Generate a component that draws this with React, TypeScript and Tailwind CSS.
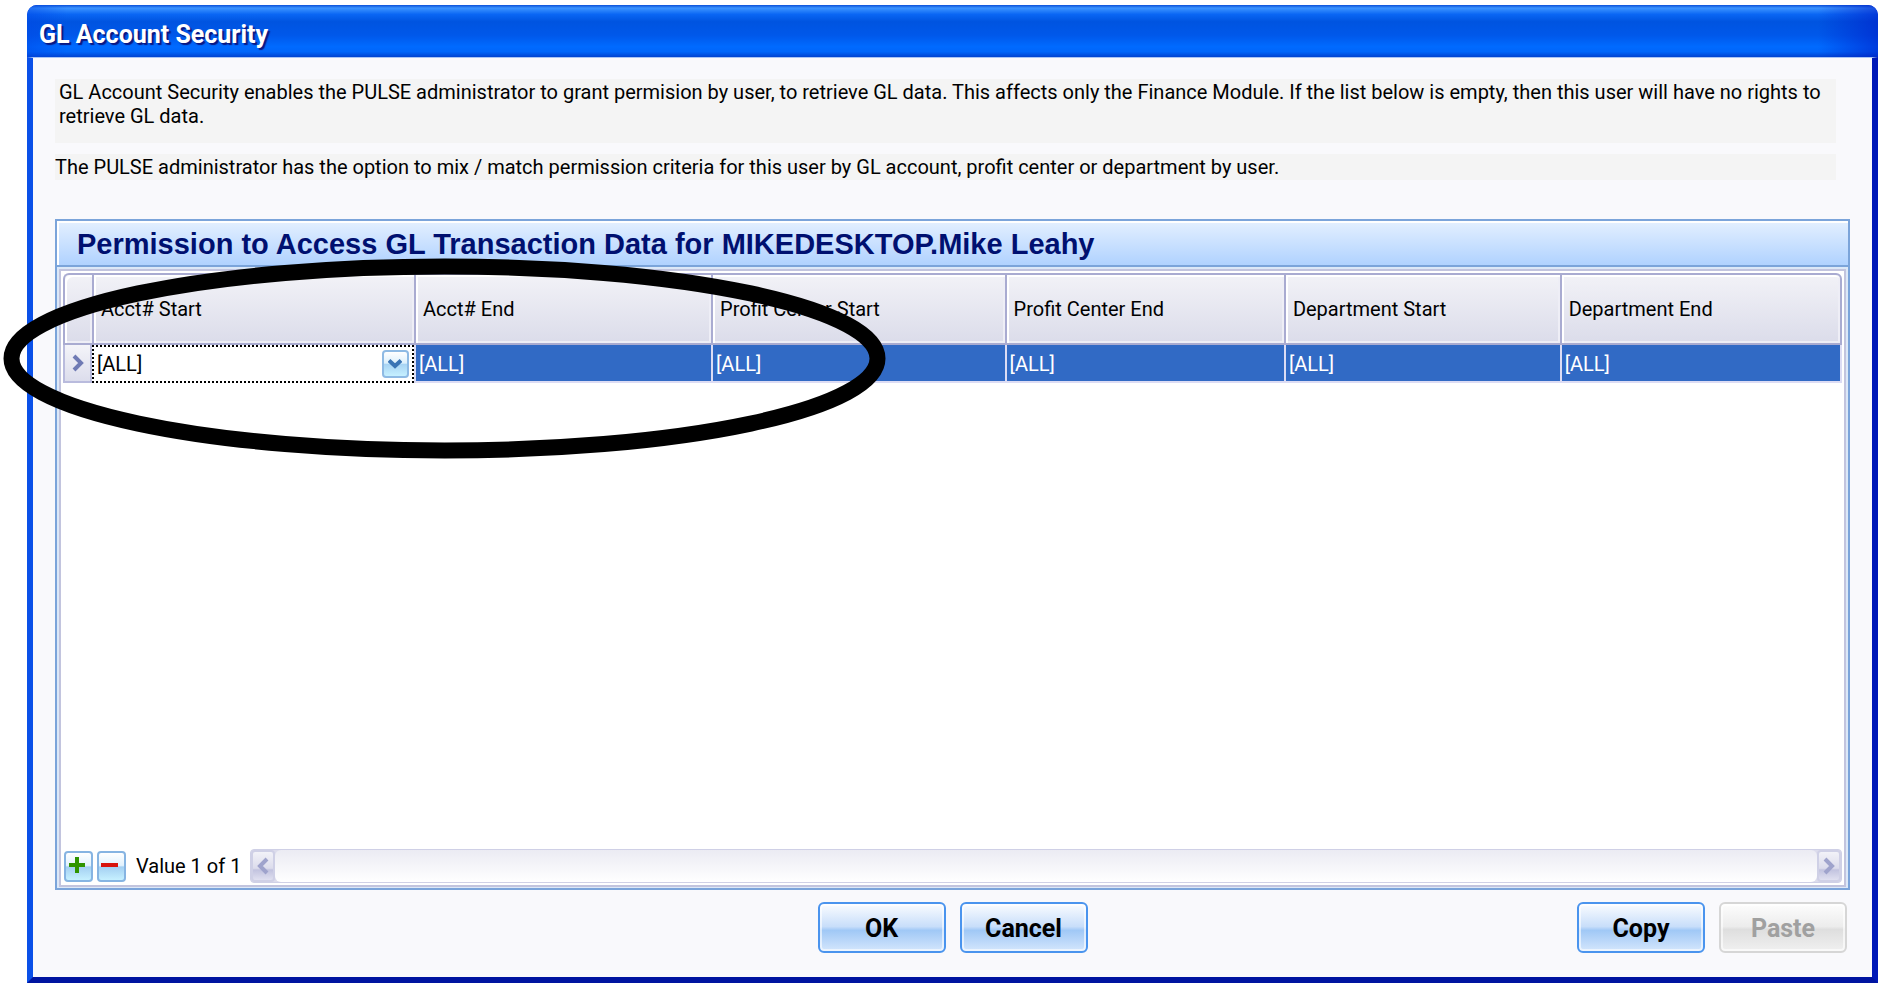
import type { ReactNode } from 'react';
import { useState } from 'react';

const columns = [
    { label: 'Acct# Start', width: 'w-[18.1%]' },
    { label: 'Acct# End', width: 'w-[16.7%]' },
    { label: 'Profit Center Start', width: 'w-[16.5%]' },
    { label: 'Profit Center End', width: 'w-[15.7%]' },
    { label: 'Department Start', width: 'w-[15.5%]' },
    { label: 'Department End', width: '' }
];

interface DialogButtonProps {
    children: ReactNode;
    disabled?: boolean;
}

const DialogButton = ({ children, disabled = false }: DialogButtonProps) => (
    <button
        type="button"
        disabled={disabled}
        className={`h-[51px] w-32 rounded-md border-2 pt-0.5 text-[25px] leading-7 font-bold shadow-[inset_0_0_0_2px_rgba(255,255,255,0.6)] ${disabled
            ? 'border-[#d6d6d6] bg-[linear-gradient(to_bottom,#fdfdfd_0%,#ececec_48%,#dedede_54%,#f0f0f0_100%)] text-[#a0a0a0]'
            : 'border-[#4a94ee] bg-[linear-gradient(to_bottom,#fafcff_0%,#c8defa_48%,#a0c8f6_56%,#d4e6fc_100%)] text-black'
            }`}
    >
        {children}
    </button>
);

const RowButton = ({ label, children }: { label: string; children: ReactNode }) => (
    <button
        type="button"
        title={label}
        aria-label={label}
        className="flex h-[31px] w-[29px] items-center justify-center rounded-[4px] border-2 border-[#86b4e2] bg-[linear-gradient(to_bottom,#ffffff_0%,#e2f2fd_46%,#a4d0f2_52%,#c6f0ff_100%)] pr-1 pb-0.5"
    >
        {children}
    </button>
);

const ScrollButton = ({ label, path }: { label: string; path: string }) => (
    <button
        type="button"
        title={label}
        aria-label={label}
        className="flex w-6 items-center justify-center rounded-[4px] border-2 border-[#cfd0e6] bg-[linear-gradient(to_bottom,#f2f2f8_0%,#dcdcec_58%,#c2c3df_64%,#e0e0f0_100%)]"
    >
        <svg width="12" height="18" viewBox="0 0 12 18" fill="none" stroke="#9fa3cc" strokeWidth="4">
            <path d={path} />
        </svg>
    </button>
);

const PermissionTable = () => {
    const [account, setAccount] = useState('[ALL]');

    return (
        <table className="w-full table-fixed border-separate border-spacing-0 text-left text-xl leading-6">
            <thead>
                <tr className="h-[72px]">
                    <th className="w-[29px] rounded-tl-md border-2 border-r-0 border-[#a9abd1] bg-[linear-gradient(to_bottom,#f2f2f7,#dbdcea)] shadow-[inset_2px_2px_0_#fff,inset_-2px_-2px_0_#eeeef6]">
                        <span className="sr-only" />
                    </th>
                    {columns.map((col) => (
                        <th
                            key={col.label}
                            className={`border-y-2 border-l-2 border-[#a9abd1] bg-[linear-gradient(to_bottom,#f2f2f7,#dbdcea)] pl-[7px] font-normal shadow-[inset_2px_2px_0_#fff,inset_-2px_-2px_0_#eeeef6] last:rounded-tr-md last:border-r-2 ${col.width}`}
                        >
                            {col.label}
                        </th>
                    ))}
                </tr>
            </thead>
            <tbody>
                <tr className="h-[38px] text-white">
                    <td className="border-x-2 border-b-2 border-[#b9bbdd] bg-[linear-gradient(to_bottom,#f4f4f9,#dcddec)] p-0">
                        <svg className="mx-auto" width="14" height="18" viewBox="0 0 14 18" fill="none" stroke="#6f7ab4" strokeWidth="4">
                            <path d="M3 2l7 7-7 7" />
                        </svg>
                    </td>
                    <td className="border-2 border-dotted border-black bg-white p-0 text-black">
                        <div className="relative">
                            <select
                                aria-label="Acct# Start"
                                value={account}
                                onChange={(e) => setAccount(e.target.value)}
                                className="block h-[34px] w-full appearance-none bg-transparent pl-[3px] outline-none"
                            >
                                <option>[ALL]</option>
                            </select>
                            <span className="pointer-events-none absolute top-[3px] right-[3px] flex h-7 w-[27px] items-center justify-center rounded-[4px] border-2 border-[#8ebae4] bg-[linear-gradient(to_bottom,#ffffff_0%,#dcf0fc_46%,#a8d4f4_52%,#c6f0ff_100%)]">
                                <svg width="14" height="10" viewBox="0 0 14 10" fill="none" stroke="#3a74b4" strokeWidth="4">
                                    <path d="M1 1.5l6 5.5 6-5.5" />
                                </svg>
                            </span>
                        </div>
                    </td>
                    {columns.slice(1).map((col) => (
                        <td key={col.label} className="border-b-2 border-l-2 border-[#dcdcf4] bg-[#316ac5] pt-0.5 pr-0 pb-0 pl-[3px] last:border-r-2">
                            [ALL]
                        </td>
                    ))}
                </tr>
            </tbody>
        </table>
    );
};

const App = () => (
    <div className="relative flex min-h-screen flex-col bg-white pt-[5px] pr-[2px] pb-px pl-[27px] font-['Roboto','Liberation_Sans',sans-serif] text-black">
        <main className="flex grow flex-col rounded-t-[10px] bg-[#0831d9]">
            <header className="flex h-[52px] items-center rounded-t-[10px] bg-[linear-gradient(to_right,rgba(0,70,230,0.5)_0,transparent_40px,transparent_calc(100%-60px),rgba(0,30,200,0.6)_100%),linear-gradient(to_bottom,#0a50d8_0%,#3c94ff_6%,#0a66f4_18%,#0054e0_32%,#0058ea_58%,#006aff_80%,#0066fa_90%,#0042d0_100%)] pt-2 pl-3">
                <h1 className="text-[25px] leading-8 font-bold text-white [text-shadow:2px_2px_1px_#0a1883]">GL Account Security</h1>
            </header>

            <div className="flex grow flex-col border-x-[6px] border-t border-b-[6px] border-t-[#a8c4f4] border-r-[#0019b8] border-b-[#0014a0] border-l-[#0a50e8] bg-[#f9f9fc] px-[22px] pt-[21px] pb-[24px]">
                <div className="mr-[14px] bg-[#f4f4f4] text-xl leading-6">
                    <p className="h-16 pt-px pl-1">
                        GL Account Security enables the PULSE administrator to grant permision by user, to retrieve GL data. This affects only the Finance Module. If the list below is empty, then this user will have no rights to retrieve GL data.
                    </p>
                </div>
                <p className="mt-[11px] mr-[14px] h-[26px] bg-[#f4f4f4] pt-px text-xl leading-6">
                    The PULSE administrator has the option to mix / match permission criteria for this user by GL account, profit center or department by user.
                </p>

                <section className="mt-[39px] flex grow flex-col border-2 border-[#7ba4da] bg-[#dce8f8]">
                    <h2 className="border-b-2 border-[#7ba4da] bg-[linear-gradient(to_bottom,#e4f0ff,#b0d2ff)] pt-[7px] pb-[5px] pl-5 font-['Liberation_Sans',sans-serif] text-[29px] leading-8 font-bold text-[#001070] shadow-[inset_2px_2px_0_#fff]">
                        Permission to Access GL Transaction Data for MIKEDESKTOP.Mike Leahy
                    </h2>
                    <div className="m-[2px] mb-px flex grow flex-col border-2 border-[#c2c4de] bg-white p-[2px]">
                        <PermissionTable />
                        <div className="mt-auto flex h-[34px] items-center pl-px">
                            <RowButton label="Add">
                                <svg width="16" height="16" viewBox="0 0 16 16" stroke="#2f9400" strokeWidth="4">
                                    <path d="M8 0v16M0 8h16" />
                                </svg>
                            </RowButton>
                            <span className="w-1" />
                            <RowButton label="Remove">
                                <svg width="17" height="16" viewBox="0 0 17 16" stroke="#d8140c" strokeWidth="4">
                                    <path d="M0 8h17" />
                                </svg>
                            </RowButton>
                            <span className="ml-[10px] w-[114px] text-xl leading-6 whitespace-nowrap">Value 1 of 1</span>
                            <div className="flex h-[34px] grow rounded-[4px] border border-[#cfd0e6] bg-[#dcdcec]">
                                <ScrollButton label="Scroll left" path="M10 2L3 9l7 7" />
                                <div className="grow rounded-[6px] bg-[linear-gradient(to_bottom,#ebebf3,#ffffff)]" />
                                <ScrollButton label="Scroll right" path="M2 2l7 7-7 7" />
                            </div>
                        </div>
                    </div>
                </section>

                <footer className="mt-3 grid grid-cols-[1fr_auto_1fr] items-center">
                    <div />
                    <div className="flex gap-[14px]">
                        <DialogButton>OK</DialogButton>
                        <DialogButton>Cancel</DialogButton>
                    </div>
                    <div className="flex justify-end gap-[14px] pr-[3px]">
                        <DialogButton>Copy</DialogButton>
                        <DialogButton disabled>Paste</DialogButton>
                    </div>
                </footer>
            </div>
        </main>

        {/* Marker ring around the account columns */}
        <svg className="pointer-events-none absolute top-[258px] left-[3px]" width="883" height="202" viewBox="0 0 883 202" fill="none">
            <ellipse cx="441.5" cy="100.5" rx="433" ry="92" stroke="#000" strokeWidth="16" />
        </svg>
    </div>
);

export default App;
